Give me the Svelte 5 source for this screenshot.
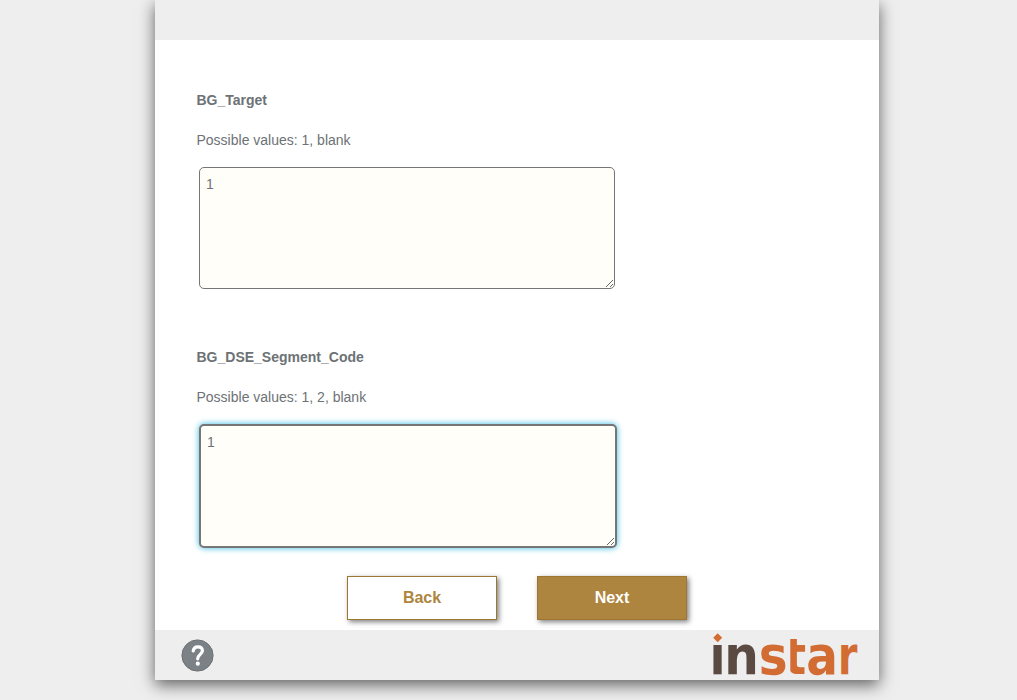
<script>
  let target = $state('1');
  let segment = $state('1');
</script>

<main class="page">
  <header></header>
  <section class="content">
    <div class="question first">
      <h2>BG_Target</h2>
      <p>Possible values: 1, blank</p>
      <textarea aria-label="BG_Target" bind:value={target}></textarea>
    </div>
    <div class="question">
      <h2>BG_DSE_Segment_Code</h2>
      <p>Possible values: 1, 2, blank</p>
      <textarea class="active" aria-label="BG_DSE_Segment_Code" bind:value={segment}></textarea>
    </div>
    <nav>
      <button class="back">Back</button>
      <button class="next">Next</button>
    </nav>
  </section>
  <footer>
    <svg class="help" width="34" height="34" viewBox="0 0 34 34">
      <circle cx="16.5" cy="16.5" r="15.6" fill="#7b8185" stroke="#6a7074" stroke-width="1" />
      <path d="M12.2 12C12.5 9.3 14.2 7.8 16.9 7.8C19.6 7.8 21.4 9.3 21.4 11.8C21.4 15.4 16.7 15.4 16.7 19.8" fill="none" stroke="#fff" stroke-width="3.2" stroke-linecap="round" />
      <circle cx="16.8" cy="24.7" r="2.1" fill="#fff" />
    </svg>
    <svg class="logo" width="152" height="50" viewBox="0 0 152 50">
      <defs>
        <clipPath id="t-shape"><rect x="81.3" y="9" width="15.2" height="37" /></clipPath>
      </defs>
      <path d="M8.7 3.2L13.2 7.7L8.7 12.2L4.2 7.7Z" fill="#d26c33" />
      <g class="word">
        <text transform="translate(.4 44) scale(.87 1)" fill="#5b4a42">ı</text>
        <text transform="translate(15.2 44) scale(.9 1)" fill="#5b4a42">n</text>
        <text transform="translate(49.8 43.6) scale(.9 .98)" fill="#d26c33">s</text>
        <g clip-path="url(#t-shape)">
          <text transform="translate(75.2 44) scale(.85 1)" fill="#d26c33">t</text>
        </g>
        <text transform="translate(97.2 43.6) scale(.87 .98)" fill="#d26c33">a</text>
        <text transform="translate(128.9 44) scale(.73 1)" fill="#d26c33">r</text>
      </g>
    </svg>
  </footer>
</main>

<style>
  :global(body) { background: #eee; margin: 0; }
  :global(#app) { height: 700px; }
  .page {
    width: 724px;
    height: 680px;
    margin-left: 155px;
    display: flex;
    flex-direction: column;
    background: #fff;
    box-shadow: 0 5px 15px rgba(0, 0, 0, .6);
    font-family: "Liberation Sans", Arial, sans-serif;
    color: #6d7275;
  }
  header { height: 40px; background: #eee; }
  .content { height: 590px; box-sizing: border-box; padding: 50px 41px 0; }
  .first { height: 257px; }
  h2, p { margin: 0; padding-left: .5px; font-size: 14px; line-height: 20px; }
  p { margin-top: 20px; }
  textarea {
    display: block;
    box-sizing: border-box;
    width: 416px;
    height: 122px;
    margin: 17px 0 0 3px;
    padding: 8px 6px;
    border: 1px solid #767676;
    border-radius: 5px;
    background: #fffef9;
    color: #6d7275;
    font: 14px/16px "Liberation Sans", Arial, sans-serif;
    outline: none;
    resize: both;
  }
  .active {
    width: 418px;
    height: 124px;
    border: 2px solid #767676;
    box-shadow: 0 0 6px #35b8df;
  }
  nav { display: flex; gap: 40px; padding: 28px 0 0 151px; }
  button {
    box-sizing: border-box;
    width: 150px;
    height: 44px;
    padding: 0;
    border: 1px solid #9d7632;
    font: bold 16px "Liberation Sans", Arial, sans-serif;
    box-shadow: 2px 2px 5px rgba(0, 0, 0, .5);
  }
  .back { background: #fff; color: #ad853e; }
  .next { background: #ad853e; color: #fff; }
  footer {
    height: 50px;
    background: #eee;
    display: flex;
    justify-content: space-between;
    align-items: center;
    padding: 0 18px 0 26px;
  }
  .help { margin-top: 2px; }
  .logo { overflow: visible; }
  .word { font: bold 54px "DejaVu Sans", sans-serif; }
</style>
